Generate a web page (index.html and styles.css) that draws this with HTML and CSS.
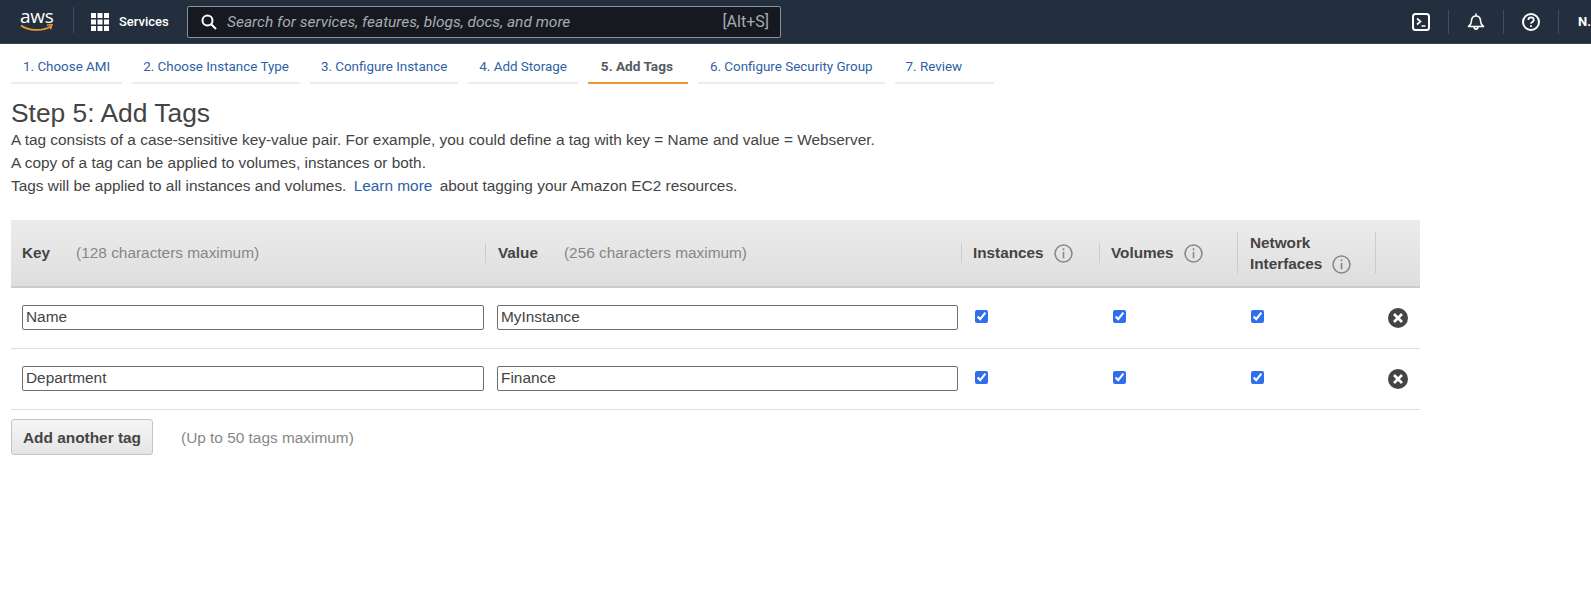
FILE: index.html
```html
<!DOCTYPE html>
<html lang="en">
<head>
<meta charset="utf-8">
<title>Step 5: Add Tags</title>
<link rel="stylesheet" href="styles.css">
</head>
<body>
<header class="topbar">
  <div class="logo">
    <span class="logo-text">aws</span>
    <svg class="logo-smile" width="34" height="8" viewBox="0 0 34 8"><path d="M1 1.5C9 7 22 7.5 31 2.5" fill="none" stroke="#ec9a2e" stroke-width="1.8"/><path d="M27 1.2l5-.6-1.6 4.6" fill="none" stroke="#ec9a2e" stroke-width="1.4"/></svg>
  </div>
  <div class="services">
    <svg width="18" height="18" viewBox="0 0 18 18" fill="#fff"><path d="M0 0h5v5H0zM6.5 0h5v5h-5zM13 0h5v5h-5zM0 6.500h5v5H0zM6.500 6.500h5v5h-5zM13 6.500h5v5h-5zM0 13h5v5H0zM6.500 13h5v5h-5zM13 13h5v5h-5z"/></svg>
    <span>Services</span>
  </div>
  <div class="search">
    <svg width="16" height="16" viewBox="0 0 16 16" fill="none" stroke="#fff" stroke-width="2"><circle cx="6.500" cy="6.500" r="5"/><path d="M10.200 10.200L15 15"/></svg>
    <span class="search-text">Search for services, features, blogs, docs, and more</span>
    <span class="search-key">[Alt+S]</span>
  </div>
  <div class="top-actions">
    <div class="action"><svg width="18" height="18" viewBox="0 0 18 18" fill="none" stroke="#fff" stroke-width="2"><rect x="1" y="1" width="16" height="16" rx="2.500"/><path d="M5 5.500L8.500 8.500 5 11.500M9.500 13h4" stroke-width="1.700"/></svg></div>
    <div class="action"><svg width="18" height="18" viewBox="0 0 18 18" fill="none" stroke="#fff" stroke-width="1.600"><path d="M1 13.500c2-.8 3.200-2.500 3.400-5.500C4.600 4.800 6.300 3 9 3s4.400 1.800 4.600 5c.2 3 1.400 4.700 3.400 5.500zM9 .5V3M7 13.500c0 3.500 4 3.500 4 0"/></svg></div>
    <div class="action"><svg width="18" height="18" viewBox="0 0 18 18" fill="none" stroke="#fff" stroke-width="2"><circle cx="9" cy="9" r="8"/><path d="M6.300 7c0-3.500 5.500-3.500 5.500 0 0 2-2.800 1.900-2.800 3.800" stroke-width="1.700"/><path d="M9 12.300v1.700" stroke-width="1.800"/></svg></div>
    <div class="action action-user">N.</div>
  </div>
</header>

<nav class="tabs">
  <a class="tab tab-wide">1. Choose AMI</a>
  <a class="tab">2. Choose Instance Type</a>
  <a class="tab">3. Configure Instance</a>
  <a class="tab">4. Add Storage</a>
  <a class="tab tab-active">5. Add Tags</a>
  <a class="tab tab-wide">6. Configure Security Group</a>
  <a class="tab tab-last">7. Review</a>
</nav>

<main class="content">
  <h1>Step 5: Add Tags</h1>
  <p>A tag consists of a case-sensitive key-value pair. For example, you could define a tag with key = Name and value = Webserver.</p>
  <p>A copy of a tag can be applied to volumes, instances or both.</p>
  <p>Tags will be applied to all instances and volumes. <a class="link">Learn more</a> about tagging your Amazon EC2 resources.</p>

  <div class="tag-table">
    <div class="row head">
      <div class="cell"><div class="hcell first"><b>Key</b><span class="hint">(128 characters maximum)</span></div></div>
      <div class="cell"><div class="hcell"><b>Value</b><span class="hint">(256 characters maximum)</span></div></div>
      <div class="cell"><div class="hcell hcell-tight"><b>Instances</b><svg class="info" viewBox="0 0 18 18"><circle cx="9" cy="9" r="8"/><path d="M9 7.500v6M9 4v2"/></svg></div></div>
      <div class="cell"><div class="hcell hcell-tight"><b>Volumes</b><svg class="info" viewBox="0 0 18 18"><circle cx="9" cy="9" r="8"/><path d="M9 7.500v6M9 4v2"/></svg></div></div>
      <div class="cell"><div class="hcell hcell-wrap"><b>Network<br>Interfaces</b><svg class="info info-low" viewBox="0 0 18 18"><circle cx="9" cy="9" r="8"/><path d="M9 7.500v6M9 4v2"/></svg></div></div>
      <div class="cell"><div class="hcell hcell-last"></div></div>
    </div>
    <div class="row body">
      <div class="cell"><input class="text" type="text" value="Name"></div>
      <div class="cell"><input class="text" type="text" value="MyInstance"></div>
      <div class="cell cell-check"><input type="checkbox" checked></div>
      <div class="cell cell-check"><input type="checkbox" checked></div>
      <div class="cell cell-check"><input type="checkbox" checked></div>
      <div class="cell cell-x"><svg width="20" height="20" viewBox="0 0 20 20"><circle cx="10" cy="10" r="10" fill="#444"/><path d="M6 6l8 8M14 6l-8 8" stroke="#fff" stroke-width="2.600"/></svg></div>
    </div>
    <div class="row body">
      <div class="cell"><input class="text" type="text" value="Department"></div>
      <div class="cell"><input class="text" type="text" value="Finance"></div>
      <div class="cell cell-check"><input type="checkbox" checked></div>
      <div class="cell cell-check"><input type="checkbox" checked></div>
      <div class="cell cell-check"><input type="checkbox" checked></div>
      <div class="cell cell-x"><svg width="20" height="20" viewBox="0 0 20 20"><circle cx="10" cy="10" r="10" fill="#444"/><path d="M6 6l8 8M14 6l-8 8" stroke="#fff" stroke-width="2.600"/></svg></div>
    </div>
  </div>

  <div class="add-row">
    <button class="add-btn" type="button">Add another tag</button>
    <span class="add-hint">(Up to 50 tags maximum)</span>
  </div>
</main>
</body>
</html>
```
FILE: styles.css
```css
* { box-sizing: border-box; }
html, body { margin: 0; padding: 0; height: 100%; overflow: hidden; background: #fff; }
body { font-family: "Liberation Sans", Arial, sans-serif; color: #444; font-size: 15.400px; }

.topbar { display: flex; align-items: center; height: 44px; background: #232f3e; border-bottom: 1px solid #3b4654; color: #fff; }
.logo { width: 74px; height: 26px; margin-top: -4px; padding-left: 20px; border-right: 1px solid #414d5c; position: relative; }
.logo-text { display: block; font: 19px/18px "Open Sans", sans-serif; color: #fff; letter-spacing: -.3px; }
.logo-smile { display: block; margin-top: -1px; }
.services { display: flex; align-items: center; gap: 10px; margin-left: 17px; width: 96px; font: 500 13px Roboto, sans-serif; }
.search { display: flex; align-items: center; width: 594px; height: 32px; padding: 0 11px 0 13px; background: #16191f; border: 1px solid #879596; border-radius: 2px; }
.search-text { margin-left: 10px; flex: 1; font: italic 15.500px Roboto, sans-serif; color: #a5acb3; }
.search-key { font: 16px Roboto, sans-serif; color: #a5acb3; }
.top-actions { display: flex; margin-left: auto; height: 24px; }
.action { width: 55px; display: flex; align-items: center; justify-content: center; border-right: 1px solid #414d5c; }
.action-user { width: 32px; border: 0; font: 700 13px Roboto, sans-serif; justify-content: flex-start; padding-left: 19px; }

.tabs { display: flex; gap: 10px; padding: 0 11px; height: 40px; }
.tab { display: flex; align-items: center; justify-content: center; height: 40px; padding: 6px 11px 0; border-bottom: 2px solid #eaeded; color: #2d5fa8; font: 13.400px Roboto, sans-serif; }
.tab-wide { padding: 6px 12px 0; }
.tab-active { color: #545b64; font-weight: 700; font-size: 13.600px; border-bottom-color: #ec9a2e; padding: 6px 15px 0 13px; }
.tab-last { justify-content: flex-start; width: 99px; }

.content { padding: 13px 0 0 11px; width: 1420px; }
h1 { margin: 0; font: 400 26.400px/32px "Liberation Sans", sans-serif; color: #444; }
p { margin: 0; font-size: 15.400px; line-height: 22.800px; color: #444; }
.link { color: #2d5fa8; margin: 0 3px; }

.tag-table { margin-top: 23px; }
.row { display: grid; grid-template-columns: 474px 476px 138px 138px 138px 45px; }
.head { height: 68px; background: linear-gradient(#ececec, #dedede); border-bottom: 2px solid #ccc; align-items: center; }
.body { height: 61px; border-bottom: 1px solid #ddd; align-items: center; }
.hcell { display: flex; align-items: center; min-height: 20px; padding-left: 12px; border-left: 1px solid #ccc; font-size: 15.300px; }
.hcell.first { border-left: 0; padding-left: 11px; }
.hcell-tight { padding-left: 11px; }
.hcell-wrap { min-height: 42px; line-height: 21px; }
.hcell-last { min-height: 42px; }
.hcell b { color: #444; }
.hint { margin-left: 26px; color: #878787; font-size: 15.400px; }
.info { width: 19px; height: 19px; margin-left: 10px; fill: none; stroke: #888; stroke-width: 1.500; }
.info-low { align-self: flex-end; margin-left: 10px; }
.cell-check { padding-left: 14px; display: flex; align-items: center; margin-top: -4px; }
.cell-check input { margin: 0; width: 13px; height: 13px; accent-color: #2f6fed; }
.cell-x { padding-left: 13px; display: flex; }
.text { display: block; width: 462px; height: 25px; margin-left: 11px; margin-top: -2px; padding: 0 3px; border: 1px solid #6e6e6e; border-radius: 2px; font: 15.400px "Liberation Sans", sans-serif; color: #444; background: #fff; outline: 0; }
.cell + .cell .text { margin-left: 12px; width: 461px; }

.add-row { display: flex; align-items: center; margin-top: 9px; }
.add-btn { width: 142px; height: 36px; padding: 2px 0 0; background: linear-gradient(#f6f6f6, #e5e5e5); border: 1px solid #c4c4c4; border-radius: 3px; font: 700 15.400px "Liberation Sans", sans-serif; color: #444; }
.add-hint { margin: 2px 0 0 28px; color: #878787; font-size: 15.400px; }
```
